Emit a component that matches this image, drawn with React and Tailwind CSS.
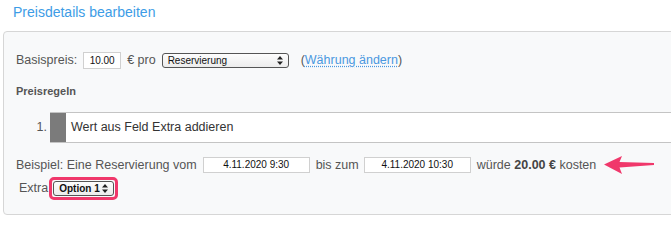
const font = { fontFamily: '"Liberation Sans", Arial, sans-serif' };

const Updown = () => (
  <svg width="6" height="9" viewBox="0 0 6 9" className="shrink-0">
    <path d="M3 0 L6 3.5 L0 3.5 Z M3 9 L6 5.5 L0 5.5 Z" fill="#222" />
  </svg>
);

const FakeSelect = ({ label, className, bold }) => (
  <div
    className={`flex items-center justify-between h-[15px] rounded-[3px] border border-[#555] bg-gradient-to-b from-[#fdfdfd] to-[#ececec] pl-[5px] pr-[5px] text-[10px] text-[#111] ${bold ? "font-semibold" : ""} ${className}`}
  >
    <span className="leading-none">{label}</span>
    <Updown />
  </div>
);

const FakeInput = ({ value, className }) => (
  <div
    className={`flex items-center justify-center bg-white border border-[#d0d0d0] text-[10px] text-[#111] leading-none ${className}`}
  >
    {value}
  </div>
);

const Arrow = () => (
  <svg width="52" height="18" viewBox="0 0 52 18" className="ml-[8px]">
    <path d="M0 8.5 L18 0 L15.5 6 L50 7 L50 9 L15.5 11.5 L18 18 Z" fill="#f0386b" />
  </svg>
);

export default function App() {
  return (
    <div className="w-[671px] h-[223px] overflow-hidden bg-white" style={font}>
      <div className="pl-[13px] pt-[4px] h-[31px] text-[14px] leading-[17px] text-[#3d9ce6]">
        Preisdetails bearbeiten
      </div>

      <div className="ml-[3px] w-[720px] h-[184px] rounded-[4px] border border-[#d6d6d6] bg-[#f8f9fa] text-[12.5px] text-[#555]">
        {/* Basispreis */}
        <div className="flex items-center h-[17px] mt-[20px] pl-[12px]">
          <span>Basispreis:</span>
          <FakeInput value="10.00" className="ml-[6px] w-[38px] h-[17px]" />
          <span className="ml-[6px]">€ pro</span>
          <FakeSelect label="Reservierung" className="ml-[6px] w-[127px]" />
          <span className="ml-[12px]">
            (
            <span className="text-[#4a98e0] underline decoration-dotted decoration-[#4a98e0] underline-offset-2">
              Währung ändern
            </span>
            )
          </span>
        </div>

        {/* Preisregeln */}
        <div className="mt-[16px] pl-[12px] text-[11px] leading-[13px] font-bold text-[#555]">
          Preisregeln
        </div>

        <div className="flex items-center mt-[14px]">
          <span className="w-[46px] text-right pr-[3px] text-[12.5px] text-[#555]">1.</span>
          <div className="flex flex-1 h-[31px] border-y border-[#c4c4c4]">
            <div className="w-[16px] bg-[#7b7b7b]" />
            <div className="flex-1 flex items-center bg-white pl-[5px] text-[#333]">
              Wert aus Feld Extra addieren
            </div>
          </div>
        </div>

        {/* Beispiel */}
        <div className="flex items-center h-[16px] mt-[14px] pl-[12px]">
          <span>Beispiel: Eine Reservierung vom</span>
          <FakeInput value="4.11.2020 9:30" className="ml-[6px] w-[107px] h-[16px]" />
          <span className="ml-[6px]">bis zum</span>
          <FakeInput value="4.11.2020 10:30" className="ml-[5px] w-[107px] h-[16px]" />
          <span className="ml-[6px]">
            würde <b className="text-[#444]">20.00 €</b> kosten
          </span>
          <Arrow />
        </div>

        {/* Extra */}
        <div className="flex items-center mt-[4px] pl-[15px]">
          <span>Extra</span>
          <div className="ml-px p-px border-[3px] border-[#f0386b] rounded-[5px]">
            <FakeSelect label="Option 1" bold className="w-[61px]" />
          </div>
        </div>
      </div>
    </div>
  );
}
